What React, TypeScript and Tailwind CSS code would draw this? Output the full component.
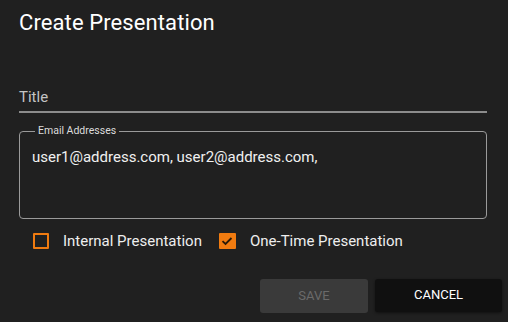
export default function App() {
  return (
    <div
      className="w-[508px] h-[322px] bg-[#202020] text-white overflow-hidden"
      style={{ fontFamily: "Roboto, 'Liberation Sans', sans-serif" }}
    >
      <div className="pl-[19px] pr-[21px] pt-[8px]">
        <h1 className="text-[22px] leading-[30px] font-normal tracking-[0.1px]">
          Create Presentation
        </h1>

        <div className="mt-[47px] border-b-2 border-[#8c8c8c] pb-[2px]">
          <span className="text-[15px] leading-[20px] text-[#c4c4c4]">Title</span>
        </div>

        <fieldset className="mt-[12px] h-[94px] border border-[#9a9a9a] rounded-[4px] px-[12px] pt-0">
          <legend className="ml-[3px] px-[3px] text-[10.5px] leading-[12px] text-[#dcdcdc]">
            Email Addresses
          </legend>
          <div className="mt-[10px] text-[15px] leading-[20px] text-[#f0f0f0]">
            user1@address.com, user2@address.com,
          </div>
        </fieldset>

        <div className="mt-[11px] flex items-center pl-[14px] text-[15px] text-[#eeeeee]">
          <div className="flex items-center">
            <span className="w-[16px] h-[16px] border-2 border-[#f07b10] rounded-[1px]" />
            <span className="ml-[14px]">Internal Presentation</span>
          </div>
          <div className="ml-[17px] flex items-center">
            <span className="w-[17px] h-[16px] bg-[#f07b10] rounded-[1px] flex items-center justify-center">
              <svg width="12" height="10" viewBox="0 0 12 10" fill="none">
                <path d="M1.5 5.2 L4.5 8 L10.5 2" stroke="#2a1a08" strokeWidth="1.8" />
              </svg>
            </span>
            <span className="ml-[14px]">One-Time Presentation</span>
          </div>
        </div>

        <div className="mt-[26px] flex justify-end gap-[7px] mr-[-15px]">
          <button className="w-[108px] h-[34px] rounded-[3px] bg-[#3a3a3a] text-[#6a6a6a] text-[13px] font-normal">
            SAVE
          </button>
          <button className="w-[127px] h-[33px] rounded-[3px] bg-[#101010] text-white text-[13px] font-normal shadow-[0_1px_3px_rgba(0,0,0,0.5)]">
            CANCEL
          </button>
        </div>
      </div>
    </div>
  );
}
